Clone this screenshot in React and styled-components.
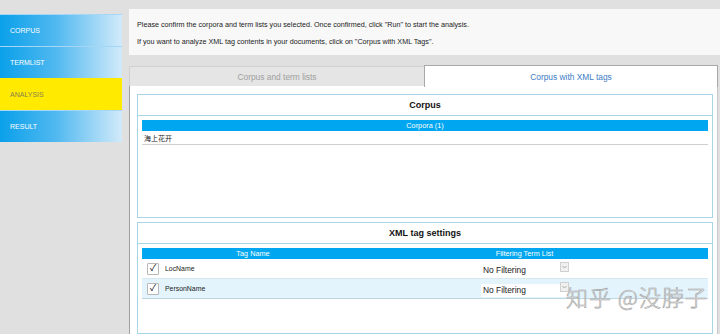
import React from "react";
import styled, { createGlobalStyle } from "styled-components";

const Global = createGlobalStyle`
  html, body { margin: 0; padding: 0; }
  body {
    background: #e0e0e0;
    font-family: "Liberation Sans", Arial, "Noto Sans CJK SC", sans-serif;
    overflow: hidden;
  }
`;

const Page = styled.div`
  display: flex;
  width: 720px;
  height: 334px;
  position: relative;
  overflow: hidden;
`;

const Sidebar = styled.nav`
  width: 122px;
  flex: none;
  padding-top: 14px;
  display: flex;
  flex-direction: column;
`;

const NavItem = styled.div`
  height: 31px;
  display: flex;
  align-items: center;
  padding-left: 10px;
  font-size: 7px;
  color: ${(p) => (p.$active ? "#8a8250" : "#ffffff")};
  background: ${(p) =>
    p.$active
      ? "#ffea00"
      : "linear-gradient(to right, #0aa0ea 0%, #4fb8f0 45%, #d2eafa 100%)"};
  border-top: 1px solid ${(p) => (p.$active ? "#ffea00" : "#a6d6f5")};
`;

const Main = styled.main`
  flex: 1;
  margin-left: 7px;
  padding-top: 9px;
  display: flex;
  flex-direction: column;
  min-width: 0;
`;

const InfoBox = styled.div`
  height: 46px;
  box-sizing: border-box;
  background: #f8f8f8;
  padding: 2px 0 0 8px;
  display: flex;
  flex-direction: column;
  justify-content: center;
  gap: 8px;
  font-size: 7.2px;
  color: #222;
`;

const Tabs = styled.div`
  margin-top: 9px;
  display: flex;
  align-items: flex-end;
  height: 22px;
  padding-right: 2px;
`;

const Tab = styled.div`
  flex: none;
  width: ${(p) => p.$w}px;
  height: ${(p) => (p.$active ? 22 : 20)}px;
  box-sizing: border-box;
  display: flex;
  align-items: center;
  justify-content: center;
  font-size: 8.4px;
  color: ${(p) => (p.$active ? "#3d7cc4" : "#a0a0a0")};
  background: ${(p) => (p.$active ? "#ffffff" : "#e5e5e5")};
  border: 1px solid ${(p) => (p.$active ? "#a8a8a8" : "#d0d0d0")};
  border-bottom: none;
  border-right: ${(p) => (p.$active ? "1px solid #a8a8a8" : "none")};
  position: relative;
  z-index: ${(p) => (p.$active ? 1 : 0)};
  margin-bottom: ${(p) => (p.$active ? -1 : 0)}px;
`;

const Panel = styled.section`
  flex: 1;
  background: #ffffff;
  border-left: 1px solid #a0a0a0;
  border-right: 1px solid #c8c8c8;
  margin-right: 2px;
  padding: 8px 4px 0 7px;
  display: flex;
  flex-direction: column;
  gap: 4px;
  min-height: 0;
`;

const Box = styled.div`
  border: 1px solid #a9d6e6;
  display: flex;
  flex-direction: column;
  height: ${(p) => (p.$h ? `${p.$h}px` : "auto")};
  flex: ${(p) => (p.$h ? "none" : 1)};
  box-sizing: border-box;
`;

const BoxTitle = styled.div`
  height: 20px;
  flex: none;
  display: flex;
  align-items: center;
  justify-content: center;
  font-size: 9px;
  font-weight: bold;
  color: #111;
  border-bottom: 1px solid #a9d6e6;
`;

const BoxBody = styled.div`
  padding: 4px 4px 0 4px;
  display: flex;
  flex-direction: column;
`;

const HeadBar = styled.div`
  height: 11px;
  background: #00a6ef;
  color: #ffffff;
  font-size: 7.3px;
  display: grid;
  grid-template-columns: ${(p) => p.$cols || "1fr"};
  align-items: center;
`;

const HeadCell = styled.div`
  text-align: center;
`;

const ListRow = styled.div`
  height: 13px;
  display: flex;
  align-items: center;
  padding-left: 2px;
  font-size: 7px;
  color: #222;
  border-bottom: 1px solid #cfcfcf;
  font-family: "Noto Sans CJK SC", sans-serif;
`;

const TagRow = styled.div`
  height: 19px;
  display: grid;
  grid-template-columns: 222px 321px 1fr;
  align-items: center;
  background: ${(p) => (p.$alt ? "#e3f4fd" : "#ffffff")};
  border-bottom: 1px solid ${(p) => (p.$alt ? "#bcd6e2" : "#d8e8f0")};
`;

const TagCell = styled.div`
  display: flex;
  align-items: center;
  gap: 6px;
  padding-left: 5px;
  font-size: 6.9px;
  color: #222;
`;

const Check = styled.span`
  width: 12px;
  height: 12px;
  box-sizing: border-box;
  border: 1px solid #b8b8b8;
  border-radius: 1px;
  background: #fff;
  display: flex;
  align-items: center;
  justify-content: center;
  font-size: 9px;
  color: #111;
  line-height: 1;
`;

const SelectBox = styled.div`
  margin-left: 117px;
  width: 88px;
  height: 13px;
  margin-top: 4px;
  display: flex;
  align-items: center;
  justify-content: space-between;
  background: #fff;
  font-size: 8.4px;
  line-height: 13px;
  color: #222;
  padding-left: 2px;
  box-sizing: border-box;
`;

const Arrow = styled.span`
  width: 9px;
  height: 10px;
  box-sizing: border-box;
  border: 1px solid #d0d0d0;
  background: #f0f0f0;
  display: flex;
  align-items: center;
  justify-content: center;
  align-self: flex-start;
  margin-top: -2px;
`;

const Watermark = styled.div`
  position: absolute;
  left: 566px;
  top: 281px;
  font-size: 22px;
  line-height: 30px;
  font-family: "Noto Sans CJK SC", sans-serif;
  font-weight: 300;
  color: rgba(255, 255, 255, 0.9);
  -webkit-text-stroke: 0.6px #a0a0a0;
  letter-spacing: 1px;
  white-space: nowrap;
  pointer-events: none;
`;

const tags = ["LocName", "PersonName"];

export default function App() {
  return (
    <>
      <Global />
      <Page>
        <Sidebar>
          <NavItem>CORPUS</NavItem>
          <NavItem>TERMLIST</NavItem>
          <NavItem $active>ANALYSIS</NavItem>
          <NavItem>RESULT</NavItem>
        </Sidebar>
        <Main>
          <InfoBox>
            <div>
              Please confirm the corpora and term lists you selected. Once confirmed, click "Run" to start the analysis.
            </div>
            <div>
              If you want to analyze XML tag contents in your documents, click on "Corpus with XML Tags".
            </div>
          </InfoBox>
          <Tabs>
            <Tab $w={295}>Corpus and term lists</Tab>
            <Tab $w={294} $active>Corpus with XML tags</Tab>
          </Tabs>
          <Panel>
            <Box $h={124}>
              <BoxTitle>Corpus</BoxTitle>
              <BoxBody>
                <HeadBar>
                  <HeadCell>Corpora (1)</HeadCell>
                </HeadBar>
                <ListRow>海上花开</ListRow>
              </BoxBody>
            </Box>
            <Box>
              <BoxTitle>XML tag settings</BoxTitle>
              <BoxBody>
                <HeadBar $cols="222px 321px 1fr">
                  <HeadCell>Tag Name</HeadCell>
                  <HeadCell>Filtering Term List</HeadCell>
                  <HeadCell />
                </HeadBar>
                {tags.map((t, i) => (
                  <TagRow key={t} $alt={i % 2 === 1}>
                    <TagCell>
                      <Check>✓</Check>
                      {t}
                    </TagCell>
                    <SelectBox>
                      <span>No Filtering</span>
                      <Arrow>
                        <svg width="5" height="4" viewBox="0 0 5 4">
                          <path d="M0.5 1 L2.5 3 L4.5 1" fill="none" stroke="#999" strokeWidth="0.8" />
                        </svg>
                      </Arrow>
                    </SelectBox>
                    <div />
                  </TagRow>
                ))}
              </BoxBody>
            </Box>
          </Panel>
        </Main>
        <Watermark>知乎 @没脖子</Watermark>
      </Page>
    </>
  );
}
